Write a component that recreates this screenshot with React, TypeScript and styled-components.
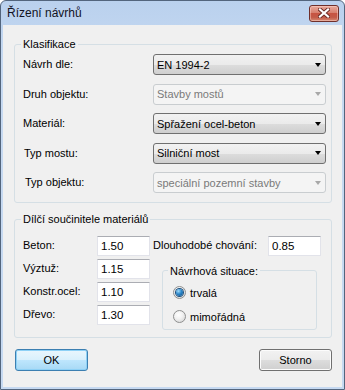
import React from "react";
import styled, { createGlobalStyle, css } from "styled-components";

const GlobalStyle = createGlobalStyle`
  html, body { margin: 0; padding: 0; background: #ffffff; }
  body {
    font-family: "Liberation Sans", Arial, sans-serif;
    font-size: 11px;
    color: #000;
  }
  * { box-sizing: border-box; }
`;

const Window = styled.div`
  width: 345px;
  height: 390px;
  border: 1px solid #53657d;
  border-radius: 6px 6px 0 0;
  background: linear-gradient(#bad1ee, #c6d9f1 60px, #c6d9f1);
  display: flex;
  flex-direction: column;
  padding: 0 2px 2px 2px;
`;

const TitleBar = styled.div`
  height: 24px;
  flex: none;
  display: flex;
  align-items: center;
  justify-content: space-between;
  padding: 0 3px 0 4px;
`;

const TitleText = styled.span`
  font-size: 12px;
  color: #12121e;
  line-height: 14px;
`;

const CloseButton = styled.div`
  width: 30px;
  height: 17px;
  border: 1px solid #6f2f2a;
  border-radius: 3px;
  background: linear-gradient(#e9a99b 0%, #d7806f 45%, #c75442 50%, #c35a47 75%, #d68a74 100%);
  box-shadow: inset 0 0 0 1px rgba(255, 220, 210, 0.45);
  display: flex;
  align-items: center;
  justify-content: center;
`;

const Client = styled.div`
  flex: 1;
  background: #f0f0f0;
  padding: 12px 10px 0 11px;
  display: flex;
  flex-direction: column;
`;

const GroupBox = styled.fieldset<{ $top?: number; $left?: number; $width?: number }>`
  margin: ${(p) => p.$top ?? 0}px 0 0 ${(p) => p.$left ?? 0}px;
  padding: 0;
  border: 1px solid #d5dfe5;
  border-radius: 3px;
  min-width: 0;
  ${(p) => p.$width && css`width: ${p.$width}px;`}
`;

const GroupTitle = styled.legend<{ $offset: number }>`
  padding: 0 2px;
  margin-left: ${(p) => p.$offset}px;
  line-height: 14px;
  font-size: 11px;
  color: #000;
`;

const ClassGrid = styled.div`
  display: grid;
  grid-template-columns: 130px 173px;
  grid-auto-rows: 21px;
  row-gap: 8.5px;
  padding: 3px 0 9px 8px;
`;

const Label = styled.span<{ $indent?: number }>`
  display: flex;
  align-items: center;
  padding-left: ${(p) => p.$indent ?? 0}px;
  padding-bottom: 1px;
  white-space: nowrap;
`;

const Combo = styled.div<{ $disabled?: boolean }>`
  height: 21px;
  display: flex;
  align-items: center;
  justify-content: space-between;
  padding: 0 4px 0 3px;
  border-radius: 3px;
  ${(p) =>
    p.$disabled
      ? css`
          border: 1px solid #c9cdd0;
          background: #f4f4f4;
          color: #7a7a7a;
        `
      : css`
          border: 1px solid #707070;
          background: linear-gradient(#f2f2f2 0%, #ebebeb 50%, #dddddd 51%, #cfcfcf 100%);
          color: #000;
        `}
`;

const Arrow = styled.span<{ $disabled?: boolean }>`
  width: 0;
  height: 0;
  border-left: 3.5px solid transparent;
  border-right: 3.5px solid transparent;
  border-top: 4px solid ${(p) => (p.$disabled ? "#a8a8a8" : "#000")};
`;

const FactorBody = styled.div`
  display: flex;
  padding: 9.5px 0 7px 8px;
`;

const FactorGrid = styled.div`
  display: grid;
  grid-template-columns: 74px 53px;
  grid-auto-rows: 20px;
  row-gap: 3px;
  align-self: flex-start;
`;

const RightColumn = styled.div`
  margin-left: 3px;
  display: flex;
  flex-direction: column;
`;

const LongRow = styled.div`
  display: grid;
  grid-template-columns: 115px 53px;
  height: 20px;
`;

const TextBox = styled.div`
  height: 20px;
  background: #fff;
  border: 1px solid #e2e3ea;
  border-top-color: #abadb3;
  padding-left: 3px;
  display: flex;
  align-items: center;
  font-size: 11.5px;
`;

const RadioList = styled.div`
  display: flex;
  flex-direction: column;
  gap: 8px;
  padding: 7px 0 4px 10px;
`;

const RadioRow = styled.div`
  height: 16px;
  display: flex;
  align-items: center;
  gap: 4px;
`;

const RadioDot = styled.span<{ $checked?: boolean }>`
  width: 13px;
  height: 13px;
  border-radius: 50%;
  border: 1px solid #8e8f8f;
  background: radial-gradient(circle at 40% 35%, #ffffff 0%, #f2f2f2 40%, #cfcfcf 100%);
  display: flex;
  align-items: center;
  justify-content: center;
  ${(p) =>
    p.$checked &&
    css`
      &::after {
        content: "";
        width: 7px;
        height: 7px;
        border-radius: 50%;
        background: radial-gradient(circle at 35% 30%, #9fdcfb 0%, #2b86c9 45%, #0c4d86 100%);
        box-shadow: 0 0 0 1px #1d4f7c;
      }
    `}
`;

const ButtonRow = styled.div`
  margin-top: 11px;
  padding-left: 1px;
  display: flex;
  justify-content: space-between;
`;

const Button = styled.div<{ $default?: boolean }>`
  width: 73px;
  height: 22px;
  border-radius: 3px;
  display: flex;
  align-items: center;
  justify-content: center;
  font-size: 11px;
  ${(p) =>
    p.$default
      ? css`
          border: 1px solid #3c7fb1;
          background: linear-gradient(#eaf6fd 0%, #d9f0fc 50%, #bee6fd 51%, #a7d9f5 100%);
          box-shadow: inset 0 0 0 1px #8ed1f6;
        `
      : css`
          border: 1px solid #707070;
          background: linear-gradient(#f2f2f2 0%, #ebebeb 50%, #dddddd 51%, #cfcfcf 100%);
          box-shadow: inset 0 0 0 1px #fcfcfc;
        `}
`;

const CloseGlyph = () => (
  <svg width="12" height="10" viewBox="0 0 12 10">
    <path d="M2 1.5 L10 8.5 M10 1.5 L2 8.5" stroke="#6a2a24" strokeWidth="4" strokeLinecap="square" />
    <path d="M2 1.5 L10 8.5 M10 1.5 L2 8.5" stroke="#ffffff" strokeWidth="2.2" strokeLinecap="square" />
  </svg>
);

const classRows: { label: string; value: string; disabled?: boolean; indent?: number }[] = [
  { label: "Návrh dle:", value: "EN 1994-2" },
  { label: "Druh objektu:", value: "Stavby mostů", disabled: true },
  { label: "Materiál:", value: "Spřažení ocel-beton" },
  { label: "Typ mostu:", value: "Silniční most", indent: 1 },
  { label: "Typ objektu:", value: "speciální pozemní stavby", disabled: true, indent: 2 },
];

const factors = [
  { label: "Beton:", value: "1.50" },
  { label: "Výztuž:", value: "1.15" },
  { label: "Konstr.ocel:", value: "1.10" },
  { label: "Dřevo:", value: "1.30" },
];

export default function App() {
  return (
    <>
      <GlobalStyle />
      <Window>
        <TitleBar>
          <TitleText>Řízení návrhů</TitleText>
          <CloseButton>
            <CloseGlyph />
          </CloseButton>
        </TitleBar>
        <Client>
          <GroupBox>
            <GroupTitle $offset={6}>Klasifikace</GroupTitle>
            <ClassGrid>
              {classRows.map((r) => (
                <React.Fragment key={r.label}>
                  <Label $indent={r.indent}>{r.label}</Label>
                  <Combo $disabled={r.disabled}>
                    <span>{r.value}</span>
                    <Arrow $disabled={r.disabled} />
                  </Combo>
                </React.Fragment>
              ))}
            </ClassGrid>
          </GroupBox>
          <GroupBox $top={9}>
            <GroupTitle $offset={6}>Dílčí součinitele materiálů</GroupTitle>
            <FactorBody>
              <FactorGrid>
                {factors.map((f) => (
                  <React.Fragment key={f.label}>
                    <Label>{f.label}</Label>
                    <TextBox>{f.value}</TextBox>
                  </React.Fragment>
                ))}
              </FactorGrid>
              <RightColumn>
                <LongRow>
                  <Label>Dlouhodobé chování:</Label>
                  <TextBox>0.85</TextBox>
                </LongRow>
                <GroupBox $top={8} $left={9} $width={155}>
                  <GroupTitle $offset={5}>Návrhová situace:</GroupTitle>
                  <RadioList>
                    <RadioRow>
                      <RadioDot $checked />
                      <span>trvalá</span>
                    </RadioRow>
                    <RadioRow>
                      <RadioDot />
                      <span>mimořádná</span>
                    </RadioRow>
                  </RadioList>
                </GroupBox>
              </RightColumn>
            </FactorBody>
          </GroupBox>
          <ButtonRow>
            <Button $default>OK</Button>
            <Button>Storno</Button>
          </ButtonRow>
        </Client>
      </Window>
    </>
  );
}
